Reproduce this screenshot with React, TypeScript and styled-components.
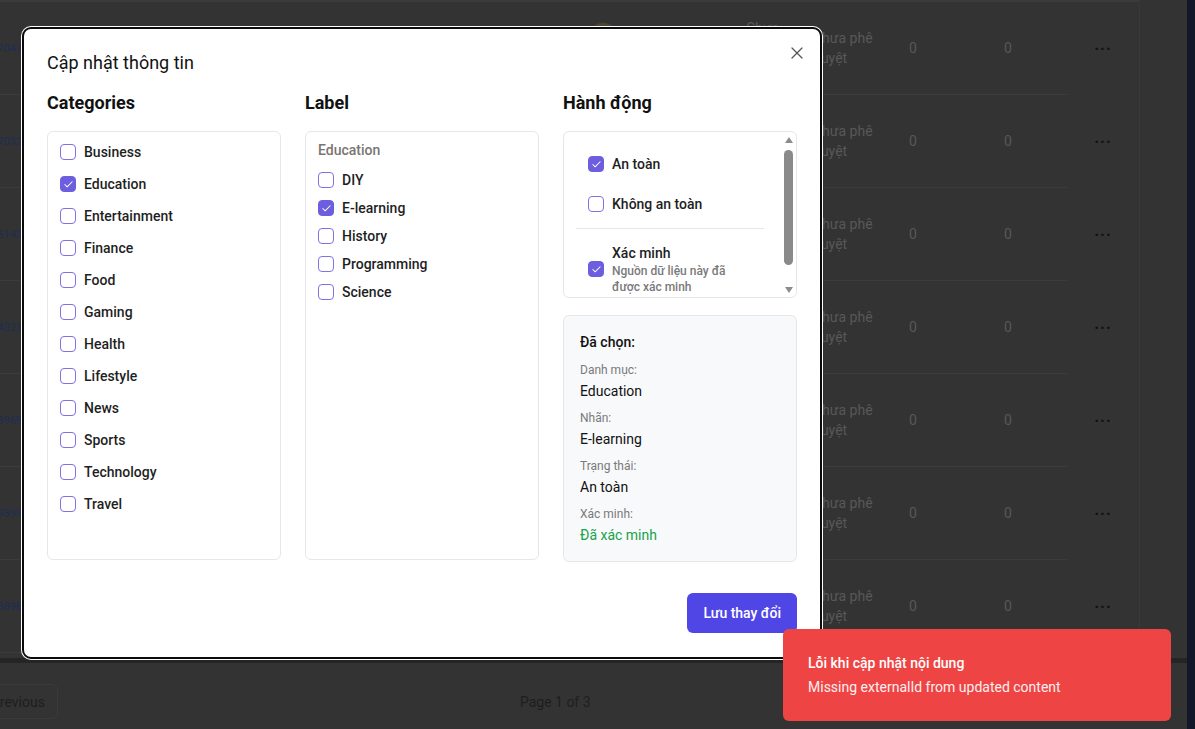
import React from "react";
import styled, { createGlobalStyle } from "styled-components";
import { X, Check } from "lucide-react";

const GlobalStyle = createGlobalStyle`
  html, body {
    margin: 0;
    padding: 0;
  }
  body {
    background: #333333;
    font-family: Roboto, "Noto Sans", sans-serif;
    overflow: hidden;
  }
  * {
    box-sizing: border-box;
  }
`;

/* ---------- background page (dimmed by the modal) ---------- */

const Screen = styled.div`
  position: relative;
  display: flex;
  width: 1195px;
  height: 729px;
  background: #333333;
  overflow: hidden;
`;

const Main = styled.div`
  flex: 1;
  display: flex;
  flex-direction: column;
  min-width: 0;
`;

const NavStrip = styled.div`
  width: 8px;
  background: #121827;
`;

const TableWrap = styled.div`
  display: flex;
  height: 658px;
`;

const Table = styled.div`
  width: 1140px;
  border-right: 1px solid #393939;
  border-top: 2px solid #3b3b3b;
  display: flex;
  flex-direction: column;
`;

const Row = styled.div`
  display: flex;
  height: 93px;
`;

const RowMain = styled.div`
  display: flex;
  align-items: center;
  width: 1067px;
  border-bottom: 1px solid #3c3c3c;
`;

const IdCell = styled.div`
  width: 22px;
  display: flex;
  justify-content: flex-end;
  overflow: hidden;
  white-space: nowrap;
  font-size: 11px;
  color: #1e2d55;
`;

const TitleCell = styled.div`
  width: 568px;
`;

const ThumbCell = styled.div`
  width: 140px;
  display: flex;
  align-items: center;
`;

const Thumb = styled.div`
  width: 26px;
  height: 50px;
  border-radius: 12px;
  background: #4b4631;
`;

const StatusCell = styled.div<{ $w: number }>`
  width: ${(p) => p.$w}px;
  padding-left: 16px;
  padding-right: 12px;
  font-size: 14px;
  line-height: 20px;
  color: #585858;
`;

const NumCell = styled.div<{ $w: number }>`
  width: ${(p) => p.$w}px;
  padding-left: 16px;
  font-size: 14px;
  color: #585858;
`;

const ActionCell = styled.div`
  flex: 1;
  display: flex;
  align-items: center;
  justify-content: center;
  font-size: 16px;
  font-weight: 700;
  letter-spacing: 1px;
  color: #111111;
`;

const ScrollBand = styled.div`
  height: 5px;
  background: #252525;
`;

const Pagination = styled.div`
  flex: 1;
  display: flex;
  align-items: center;
  padding-top: 11px;
`;

const PageButton = styled.div`
  margin-left: -24px;
  height: 35px;
  padding: 0 12px 0 14px;
  display: flex;
  align-items: center;
  border: 1px solid #3a3a3a;
  border-radius: 6px;
  font-size: 14px;
  color: #1e1e1e;
`;

const PageInfo = styled.div`
  margin-left: 462px;
  font-size: 14px;
  color: #1e1e1e;
`;

/* ---------- modal ---------- */

const Modal = styled.div`
  position: absolute;
  left: 22px;
  top: 27px;
  width: 800px;
  background: #ffffff;
  border: 2px solid #0b0b0b;
  border-radius: 9px;
  box-shadow: 0 0 0 1px #ffffff;
  padding: 24px 23px;
`;

const Title = styled.h2`
  margin: 0 0 16px;
  font-size: 18px;
  line-height: 20px;
  font-weight: 400;
  color: #111111;
`;

const CloseButton = styled.button`
  position: absolute;
  right: 13px;
  top: 14px;
  width: 20px;
  height: 20px;
  padding: 0;
  border: none;
  background: none;
  color: #555555;
  display: flex;
  align-items: center;
  justify-content: center;
`;

const Columns = styled.div`
  display: grid;
  grid-template-columns: repeat(3, 1fr);
  gap: 24px;
  height: 471px;
`;

const Column = styled.div`
  display: flex;
  flex-direction: column;
  min-height: 0;
`;

const Heading = styled.h3`
  margin: 0 0 14px;
  font-size: 18px;
  line-height: 28px;
  font-weight: 700;
  color: #111111;
`;

const Panel = styled.div`
  flex: 1;
  border: 1px solid #e5e7eb;
  border-radius: 6px;
  background: #ffffff;
`;

const List = styled.div<{ $gap: number }>`
  display: flex;
  flex-direction: column;
  gap: ${(p) => p.$gap}px;
`;

const CategoryPanel = styled(Panel)`
  padding: 10px 12px;
`;

const LabelPanel = styled(Panel)`
  padding: 8px 12px;
`;

const GroupName = styled.div`
  margin-bottom: 10px;
  font-size: 14px;
  line-height: 20px;
  font-weight: 500;
  color: #7a7570;
`;

const Option = styled.label`
  display: flex;
  align-items: center;
  gap: 8px;
  font-size: 14px;
  line-height: 20px;
  font-weight: 500;
  color: #1f1f1f;
`;

const Box = styled.span<{ $checked?: boolean }>`
  width: 16px;
  height: 16px;
  flex-shrink: 0;
  border-radius: 4px;
  border: 1.5px solid ${(p) => (p.$checked ? "#6d5ee0" : "#8073e4")};
  background: ${(p) => (p.$checked ? "#6d5ee0" : "#ffffff")};
  display: inline-flex;
  align-items: center;
  justify-content: center;
  color: #ffffff;
`;

const RightColumn = styled(Column)`
  gap: 17px;
`;

const ActionsPanel = styled.div`
  height: 167px;
  flex-shrink: 0;
  display: flex;
  border: 1px solid #e5e7eb;
  border-radius: 6px;
  overflow: hidden;
`;

const ActionsScroll = styled.div`
  flex: 1;
  min-width: 0;
  padding: 12px 17px 12px 12px;
`;

const ScrollBar = styled.div`
  width: 15px;
  display: flex;
  flex-direction: column;
  align-items: center;
`;

const Arrow = styled.div<{ $dir: "up" | "down" }>`
  height: 15px;
  width: 15px;
  display: flex;
  align-items: center;
  justify-content: center;

  &::before {
    content: "";
    border-left: 4.5px solid transparent;
    border-right: 4.5px solid transparent;
    ${(p) =>
      p.$dir === "up"
        ? "border-bottom: 6px solid #8c8c8c;"
        : "border-top: 6px solid #8c8c8c;"}
  }
`;

const Track = styled.div`
  flex: 1;
  padding-top: 3px;
`;

const ScrollThumb = styled.div`
  width: 9px;
  height: 115px;
  border-radius: 5px;
  background: #8a8a8a;
`;

const ActionItem = styled.label`
  display: flex;
  align-items: center;
  gap: 8px;
  padding: 10px 12px;
  font-size: 14px;
  line-height: 20px;
  font-weight: 500;
  color: #1f1f1f;
`;

const Divider = styled.div`
  height: 1px;
  margin: 4px 0;
  background: #e5e7eb;
`;

const ActionText = styled.div`
  display: flex;
  flex-direction: column;
`;

const ActionHint = styled.span`
  font-size: 12px;
  line-height: 16px;
  font-weight: 500;
  color: #7a7a7a;
`;

const Summary = styled.div`
  flex: 1;
  border: 1px solid #e5e7eb;
  border-radius: 6px;
  background: #f8f9fb;
  padding: 16px;
`;

const SummaryTitle = styled.div`
  margin-bottom: 10px;
  font-size: 14px;
  line-height: 20px;
  font-weight: 500;
  color: #111111;
`;

const SummaryGroup = styled.div`
  display: flex;
  flex-direction: column;
  gap: 3px;
  margin-bottom: 9px;

  &:last-child {
    margin-bottom: 0;
  }
`;

const SummaryLabel = styled.span`
  font-size: 12px;
  line-height: 16px;
  color: #7a7a7a;
`;

const SummaryValue = styled.span<{ $tone?: "ok" }>`
  font-size: 14px;
  line-height: 20px;
  color: ${(p) => (p.$tone === "ok" ? "#16a34a" : "#111111")};
`;

const Footer = styled.div`
  display: flex;
  justify-content: flex-end;
  margin-top: 33px;
`;

const SaveButton = styled.button`
  height: 40px;
  padding: 0 16px;
  border: none;
  border-radius: 6px;
  background: #4f46e5;
  color: #ffffff;
  font-family: inherit;
  font-size: 14px;
  font-weight: 500;
`;

/* ---------- toast ---------- */

const Toast = styled.div`
  position: absolute;
  right: 24px;
  bottom: 8px;
  width: 388px;
  padding: 24px 25px;
  border-radius: 6px;
  background: #ef4444;
  color: #ffffff;
`;

const ToastTitle = styled.div`
  font-size: 14px;
  line-height: 20px;
  font-weight: 500;
`;

const ToastText = styled.div`
  margin-top: 4px;
  font-size: 14px;
  line-height: 20px;
  opacity: 0.92;
`;

/* ---------- data ---------- */

const ids = ["7047", "7032", "5143", "4321", "3969", "9399", "3896"];
const categories = [
  "Business",
  "Education",
  "Entertainment",
  "Finance",
  "Food",
  "Gaming",
  "Health",
  "Lifestyle",
  "News",
  "Sports",
  "Technology",
  "Travel",
];
const labels = ["DIY", "E-learning", "History", "Programming", "Science"];

const Checkbox = ({ checked }: { checked?: boolean }) => (
  <Box $checked={checked}>{checked && <Check size={11} strokeWidth={2.2} />}</Box>
);

const BackgroundPage = () => (
  <Main>
    <TableWrap>
      <Table>
        {ids.map((id) => (
          <Row key={id}>
            <RowMain>
              <IdCell>1000{id}</IdCell>
              <TitleCell />
              <ThumbCell>
                <Thumb />
              </ThumbCell>
              <StatusCell $w={67}>Chưa phê duyệt</StatusCell>
              <StatusCell $w={96}>Chưa phê duyệt</StatusCell>
              <NumCell $w={95}>0</NumCell>
              <NumCell $w={79}>0</NumCell>
            </RowMain>
            <ActionCell>···</ActionCell>
          </Row>
        ))}
      </Table>
    </TableWrap>
    <ScrollBand />
    <Pagination>
      <PageButton>Previous</PageButton>
      <PageInfo>Page 1 of 3</PageInfo>
    </Pagination>
  </Main>
);

export default function App() {
  return (
    <>
      <GlobalStyle />
      <Screen>
        <BackgroundPage />
        <NavStrip />

        <Modal>
          <CloseButton aria-label="Close">
            <X size={20} strokeWidth={1.5} />
          </CloseButton>
          <Title>Cập nhật thông tin</Title>
          <Columns>
            <Column>
              <Heading>Categories</Heading>
              <CategoryPanel>
                <List $gap={12}>
                  {categories.map((c) => (
                    <Option key={c}>
                      <Checkbox checked={c === "Education"} />
                      {c}
                    </Option>
                  ))}
                </List>
              </CategoryPanel>
            </Column>

            <Column>
              <Heading>Label</Heading>
              <LabelPanel>
                <GroupName>Education</GroupName>
                <List $gap={8}>
                  {labels.map((l) => (
                    <Option key={l}>
                      <Checkbox checked={l === "E-learning"} />
                      {l}
                    </Option>
                  ))}
                </List>
              </LabelPanel>
            </Column>

            <RightColumn>
              <div>
                <Heading>Hành động</Heading>
                <ActionsPanel>
                  <ActionsScroll>
                    <ActionItem>
                      <Checkbox checked />
                      An toàn
                    </ActionItem>
                    <ActionItem>
                      <Checkbox />
                      Không an toàn
                    </ActionItem>
                    <Divider />
                    <ActionItem>
                      <Checkbox checked />
                      <ActionText>
                        Xác minh
                        <ActionHint>Nguồn dữ liệu này đã được xác minh</ActionHint>
                      </ActionText>
                    </ActionItem>
                  </ActionsScroll>
                  <ScrollBar>
                    <Arrow $dir="up" />
                    <Track>
                      <ScrollThumb />
                    </Track>
                    <Arrow $dir="down" />
                  </ScrollBar>
                </ActionsPanel>
              </div>
              <Summary>
                <SummaryTitle>Đã chọn:</SummaryTitle>
                <SummaryGroup>
                  <SummaryLabel>Danh mục:</SummaryLabel>
                  <SummaryValue>Education</SummaryValue>
                </SummaryGroup>
                <SummaryGroup>
                  <SummaryLabel>Nhãn:</SummaryLabel>
                  <SummaryValue>E-learning</SummaryValue>
                </SummaryGroup>
                <SummaryGroup>
                  <SummaryLabel>Trạng thái:</SummaryLabel>
                  <SummaryValue>An toàn</SummaryValue>
                </SummaryGroup>
                <SummaryGroup>
                  <SummaryLabel>Xác minh:</SummaryLabel>
                  <SummaryValue $tone="ok">Đã xác minh</SummaryValue>
                </SummaryGroup>
              </Summary>
            </RightColumn>
          </Columns>
          <Footer>
            <SaveButton>Lưu thay đổi</SaveButton>
          </Footer>
        </Modal>

        <Toast>
          <ToastTitle>Lỗi khi cập nhật nội dung</ToastTitle>
          <ToastText>Missing externalId from updated content</ToastText>
        </Toast>
      </Screen>
    </>
  );
}
